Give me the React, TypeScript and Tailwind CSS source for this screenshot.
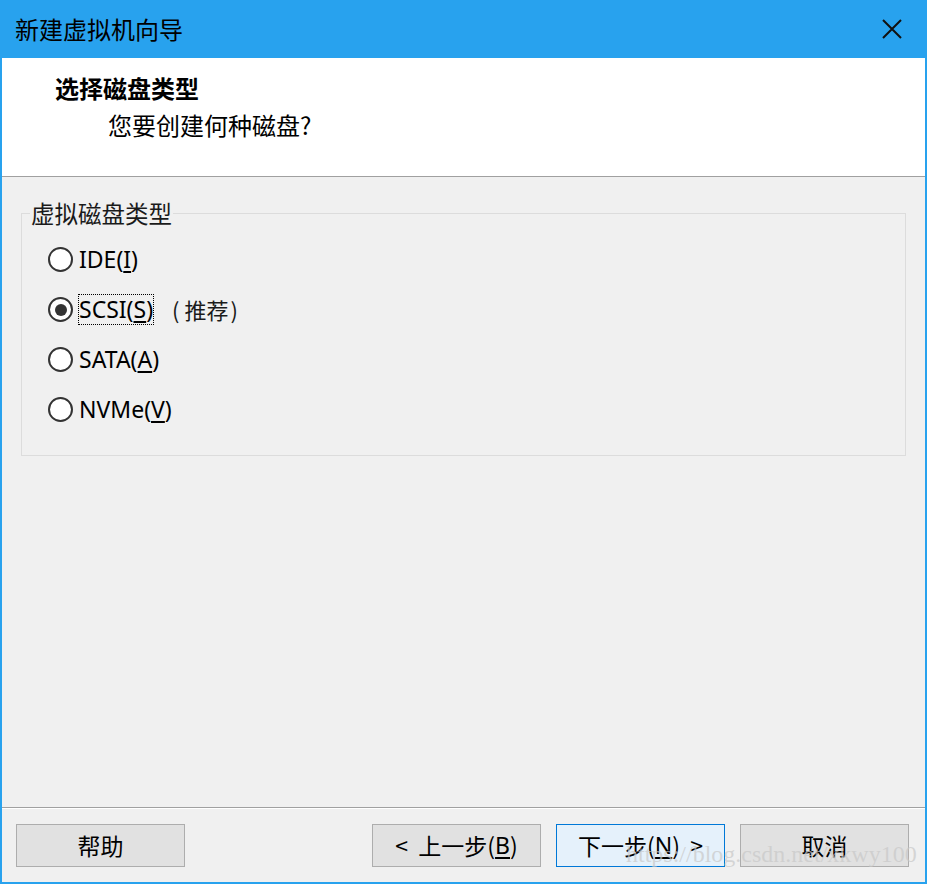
const cjk = { fontFamily: '"Noto Sans CJK SC", "Noto Sans", sans-serif' };
const latin = { fontFamily: '"Noto Sans", "Noto Sans CJK SC", sans-serif' };

const options = [
  { id: "ide", label: "IDE", key: "I" },
  { id: "scsi", label: "SCSI", key: "S", note: "推荐" },
  { id: "sata", label: "SATA", key: "A" },
  { id: "nvme", label: "NVMe", key: "V" },
];

function Radio({ checked }: { checked?: boolean }) {
  return (
    <span className="flex h-[25px] w-[25px] shrink-0 items-center justify-center rounded-full border-2 border-[#333333] bg-white">
      {checked && <span className="h-[12px] w-[12px] rounded-full bg-[#333333]" />}
    </span>
  );
}

function Button({ children, primary }: { children: React.ReactNode; primary?: boolean }) {
  return (
    <button
      className={
        primary
          ? "flex h-[43px] w-[169px] items-center justify-center whitespace-pre border border-[#0078d7] bg-[#e5f1fb] text-[23px] text-black"
          : "flex h-[43px] w-[169px] items-center justify-center whitespace-pre border border-[#adadad] bg-[#e1e1e1] text-[23px] text-black"
      }
      style={cjk}
    >
      {children}
    </button>
  );
}

export default function App() {
  return (
    <div className="flex h-[884px] w-[927px] flex-col bg-[#28a2ee]" style={cjk}>
      <div className="flex h-[58px] shrink-0 items-center justify-between pl-[15px] pr-[24px]">
        <span className="text-[24px] text-black">新建虚拟机向导</span>
        <svg width="22" height="22" viewBox="0 0 22 22">
          <path d="M2 2 L20 20 M20 2 L2 20" stroke="#111" strokeWidth="2" />
        </svg>
      </div>

      <div className="mx-[2px] mb-[2px] flex flex-1 flex-col bg-[#f0f0f0]">
        <div className="h-[119px] shrink-0 border-b border-[#a0a0a0] bg-white pl-[53px] pt-[11px]">
          <div className="text-[24px] font-bold leading-[37px] text-black">选择磁盘类型</div>
          <div className="pl-[53px] text-[24px] leading-[37px] text-black">您要创建何种磁盘?</div>
        </div>

        <div className="flex-1 px-[19px] pt-[36px]">
          <div className="relative h-[243px] border border-[#dcdcdc] pt-[33px]">
            <span className="absolute left-[8px] top-[-14px] bg-[#f0f0f0] px-[1px] text-[23.5px] leading-[26px] text-[#1a1a1a]">
              虚拟磁盘类型
            </span>
            <div className="flex flex-col gap-[25px] pl-[26px]">
              {options.map((o) => (
                <div key={o.id} className="flex h-[25px] items-center">
                  <Radio checked={o.id === "scsi"} />
                  <span
                    className={
                      o.id === "scsi"
                        ? "ml-[5px] border border-dotted border-black text-[23px] leading-[29px] text-black"
                        : "ml-[6px] text-[23px] leading-[29px] text-black"
                    }
                    style={latin}
                  >
                    {o.label}(<span className="underline underline-offset-[3px]">{o.key}</span>)
                  </span>
                  {o.note && (
                    <span className="ml-[18px] text-[22px] text-[#1a1a1a]" style={cjk}>
                      (<span className="ml-[5px] mr-[2px]">{o.note}</span>)
                    </span>
                  )}
                </div>
              ))}
            </div>
          </div>
        </div>

        <div className="h-[2px] shrink-0 border-t border-[#a0a0a0] bg-white" />

        <div className="relative flex h-[73px] shrink-0 items-start pl-[14px] pr-[16px] pt-[15px]">
          <Button>帮助</Button>
          <div className="ml-auto flex gap-[15px]">
            <Button>
              {"<  上一步("}<span className="underline underline-offset-[3px]" style={latin}>B</span>)
            </Button>
            <Button primary>
              {"下一步("}<span className="underline underline-offset-[3px]" style={latin}>N</span>{")  >"}
            </Button>
            <Button>取消</Button>
          </div>
          <span
            className="pointer-events-none absolute left-[624px] top-[27px] text-[24px] text-[#c8c8c8]/70"
            style={{ fontFamily: '"Liberation Serif", serif' }}
          >
            https://blog.csdn.net/xkwy100
          </span>
        </div>
      </div>
    </div>
  );
}
